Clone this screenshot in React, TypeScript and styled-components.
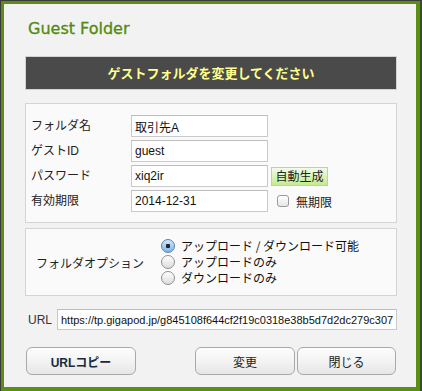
import React from 'react';
import styled, { createGlobalStyle } from 'styled-components';

const GlobalStyle = createGlobalStyle`
  * {
    box-sizing: border-box;
  }
  body {
    margin: 0;
    background-color: #2e2e2e;
    font-family: 'Liberation Sans', 'Noto Sans CJK JP', sans-serif;
  }
`;

const Frame = styled.div`
  width: 422px;
  height: 391px;
  border-top: 1px solid #3a3a3a;
  border-left: 1px solid #3a3a3a;
  border-right: 2px solid #3c4a2c;
  padding: 3px 4px 4px 3px;
  background-color: #5a8e14;
`;
const Dialog = styled.div`
  height: 100%;
  display: flex;
  flex-direction: column;
  padding: 0 19px 0 21px;
  background-color: #f2f2f2;
`;
const Title = styled.h1`
  margin: 0;
  padding: 15px 0 0 3px;
  font-family: 'DejaVu Sans', sans-serif;
  font-size: 16px;
  font-weight: normal;
  line-height: 20px;
  color: #4f8a10;
  -webkit-text-stroke: 0.3px #4f8a10;
`;
const Banner = styled.div`
  margin-top: 17px;
  height: 34px;
  display: flex;
  align-items: center;
  justify-content: center;
  border: 1px solid #d2d2d2;
  background-color: #4a4a4a;
  color: #ffff8c;
  font-family: 'Noto Sans CJK JP', sans-serif;
  font-size: 13px;
  font-weight: bold;
  line-height: 16px;
`;
const Panel = styled.div<{ $top: number }>`
  margin-top: ${(p) => p.$top}px;
  border: 1px solid #d4d4d4;
  background-color: #fafafa;
`;
const FieldList = styled.div`
  display: flex;
  flex-direction: column;
  gap: 3px;
  padding: 11px 0 10px 5px;
`;
const Row = styled.div`
  display: flex;
  align-items: center;
  height: 22px;
`;
const Label = styled.label`
  width: 100px;
  font-size: 12px;
  line-height: 15px;
  color: #222;
`;
const TextInput = styled.input<{ $width: number; $height: number; $size: number }>`
  width: ${(p) => p.$width}px;
  height: ${(p) => p.$height}px;
  padding: 0 3px;
  border: 1px solid #c9c9c9;
  border-top-color: #bdbdbd;
  background-color: #fff;
  font-family: 'Liberation Sans', 'Noto Sans CJK JP', sans-serif;
  font-size: ${(p) => p.$size}px;
  color: #111;
  outline: none;
`;
const GenerateButton = styled.button`
  margin-left: 3px;
  width: 57px;
  height: 19px;
  padding: 0;
  border: 1px solid #c6c6c6;
  background: linear-gradient(#f2fbe8, #c4eb8e);
  font-family: 'Noto Sans CJK JP', sans-serif;
  font-size: 12px;
  line-height: 14px;
  color: #222;
`;
const Check = styled.input`
  appearance: none;
  margin: 0 7px 0 9px;
  width: 12px;
  height: 12px;
  border: 1px solid #9a9a9a;
  border-radius: 3px;
  background: linear-gradient(#ffffff, #e6e6e6);
`;
const CheckText = styled.span`
  font-family: 'Noto Sans CJK JP', sans-serif;
  font-size: 12px;
  line-height: 15px;
  color: #222;
`;
const OptionBody = styled.div`
  display: flex;
  align-items: center;
  padding: 9px 0 9px 10px;
`;
const OptionLabel = styled.div`
  width: 125px;
  font-family: 'Noto Sans CJK JP', sans-serif;
  font-size: 12px;
  line-height: 15px;
  color: #222;
`;
const RadioList = styled.div`
  display: flex;
  flex-direction: column;
`;
const RadioRow = styled.label`
  display: flex;
  align-items: center;
  height: 16px;
  font-family: 'Noto Sans CJK JP', sans-serif;
  font-size: 12px;
  line-height: 14px;
  color: #111;
`;
const Radio = styled.input`
  appearance: none;
  margin: 0 6px 0 0;
  width: 14px;
  height: 14px;
  border: 1px solid #8e8e8e;
  border-radius: 50%;
  background: linear-gradient(#ffffff, #dcdcdc);

  &:checked {
    border-color: #5b7fa8;
    background:
      radial-gradient(circle, #1d2633 0 2px, transparent 2.5px),
      linear-gradient(#d2e6fa, #7fb5ea);
  }
`;
const UrlRow = styled.div`
  display: flex;
  align-items: center;
  margin-top: 13px;
  padding-left: 3px;
`;
const UrlLabel = styled.span`
  width: 29px;
  font-size: 12px;
  color: #333;
`;
const Actions = styled.div`
  display: flex;
  gap: 2px;
  margin: 17px 1px 0 1px;
`;
const Button = styled.button<{ $width: number; $strong?: boolean }>`
  width: ${(p) => p.$width}px;
  height: 28px;
  padding: 0;
  border: 1px solid #a9a9a9;
  border-radius: 6px;
  background: linear-gradient(#fdfdfd, #f3f3f3 50%, #e6e6e6);
  font-family: 'Liberation Sans', 'Noto Sans CJK JP', sans-serif;
  font-size: 12px;
  font-weight: ${(p) => (p.$strong ? 'bold' : 'normal')};
  color: ${(p) => (p.$strong ? '#1b2a3a' : '#222')};
`;
const Spacer = styled.div`
  flex: 1;
`;

const fields = [
  { label: 'フォルダ名', value: '取引先A' },
  { label: 'ゲストID', value: 'guest' },
  { label: 'パスワード', value: 'xiq2ir' },
  { label: '有効期限', value: '2014-12-31' },
];
const options = [
  'アップロード / ダウンロード可能',
  'アップロードのみ',
  'ダウンロードのみ',
];
const url = 'https://tp.gigapod.jp/g845108f644cf2f19c0318e38b5d7d2dc279c307';

const App = () => (
  <Frame>
    <GlobalStyle />
    <Dialog>
      <Title>Guest Folder</Title>
      <Banner>ゲストフォルダを変更してください</Banner>
      <Panel $top={13}>
        <FieldList>
          {fields.map((f, i) => (
            <Row key={f.label}>
              <Label>{f.label}</Label>
              <TextInput $width={137} $height={22} $size={12} defaultValue={f.value} />
              {i === 2 && <GenerateButton>自動生成</GenerateButton>}
              {i === 3 && (
                <>
                  <Check type="checkbox" />
                  <CheckText>無期限</CheckText>
                </>
              )}
            </Row>
          ))}
        </FieldList>
      </Panel>
      <Panel $top={5}>
        <OptionBody>
          <OptionLabel>フォルダオプション</OptionLabel>
          <RadioList>
            {options.map((o, i) => (
              <RadioRow key={o}>
                <Radio type="radio" name="opt" defaultChecked={i === 0} />
                {o}
              </RadioRow>
            ))}
          </RadioList>
        </OptionBody>
      </Panel>
      <UrlRow>
        <UrlLabel>URL</UrlLabel>
        <TextInput $width={340} $height={21} $size={11} defaultValue={url} />
      </UrlRow>
      <Actions>
        <Button $width={110} $strong>
          URLコピー
        </Button>
        <Spacer />
        <Button $width={100}>変更</Button>
        <Button $width={99}>閉じる</Button>
      </Actions>
    </Dialog>
  </Frame>
);

export default App;
